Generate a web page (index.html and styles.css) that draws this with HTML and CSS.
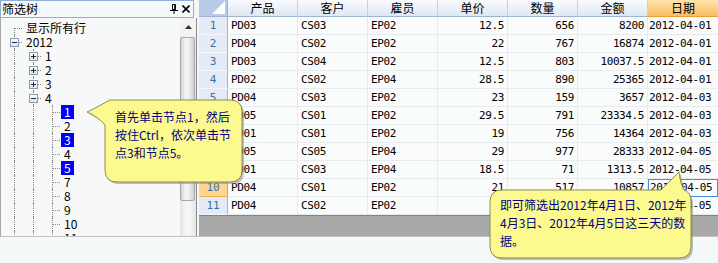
FILE: index.html
```html
<!DOCTYPE html>
<html lang="zh-CN">

<head>
  <meta charset="UTF-8" />
  <title>筛选树</title>
  <link rel="stylesheet" href="styles.css">
</head>

<body>
  <div class="app">
    <div class="workspace">
      <aside class="filter-panel">
        <div class="panel-title">
          <span>筛选树</span>
          <span class="title-icons">
            <svg class="pin" width="8" height="10" viewBox="0 0 8 10">
              <path d="M2.5 0.5h3v5h-3z" fill="none" stroke="#000" />
              <path d="M5 1v4.5" stroke="#000" stroke-width="1.5" />
              <path d="M0 6.5h8M4 6.5v3.5" stroke="#000" />
            </svg>
            <svg class="close" width="8" height="8" viewBox="0 0 8 8">
              <path d="M0.5 0.5l7 7M7.5 0.5l-7 7" stroke="#000" stroke-width="1.6" />
            </svg>
          </span>
        </div>
        <div class="tree-box">
          <div class="tree">
            <div class="node"><i class="g first"></i><span class="label">显示所有行</span></div>
            <div class="node"><i class="g tee"><b class="exp minus"></b></i><span class="label">2012</span></div>
            <div class="node"><i class="g line"></i><i class="g tee"><b class="exp plus"></b></i><span class="label">1</span></div>
            <div class="node"><i class="g line"></i><i class="g tee"><b class="exp plus"></b></i><span class="label">2</span></div>
            <div class="node"><i class="g line"></i><i class="g tee"><b class="exp plus"></b></i><span class="label">3</span></div>
            <div class="node"><i class="g line"></i><i class="g tee"><b class="exp minus"></b></i><span class="label">4</span></div>
            <div class="node"><i class="g line"></i><i class="g line"></i><i class="g tee"></i><span class="label selected">1</span></div>
            <div class="node"><i class="g line"></i><i class="g line"></i><i class="g tee"></i><span class="label">2</span></div>
            <div class="node"><i class="g line"></i><i class="g line"></i><i class="g tee"></i><span class="label selected">3</span></div>
            <div class="node"><i class="g line"></i><i class="g line"></i><i class="g tee"></i><span class="label">4</span></div>
            <div class="node"><i class="g line"></i><i class="g line"></i><i class="g tee"></i><span class="label selected">5</span></div>
            <div class="node"><i class="g line"></i><i class="g line"></i><i class="g tee"></i><span class="label">7</span></div>
            <div class="node"><i class="g line"></i><i class="g line"></i><i class="g tee"></i><span class="label">8</span></div>
            <div class="node"><i class="g line"></i><i class="g line"></i><i class="g tee"></i><span class="label">9</span></div>
            <div class="node"><i class="g line"></i><i class="g line"></i><i class="g tee"></i><span class="label">10</span></div>
            <div class="node"><i class="g line"></i><i class="g line"></i><i class="g tee"></i><span class="label">11</span></div>
          </div>
          <div class="vscroll">
            <div class="vscroll-up">
              <svg width="7" height="4" viewBox="0 0 7 4"><path d="M0 4L3.5 0L7 4z" fill="#333" /></svg>
            </div>
            <div class="vscroll-thumb"></div>
          </div>
        </div>
      </aside>

      <section class="grid">
        <div class="grid-head">
          <div class="corner">
            <svg width="13" height="13" viewBox="0 0 13 13"><path d="M13 0V13H0z" fill="#fff" /></svg>
          </div>
          <div class="col-head">产品</div>
          <div class="col-head">客户</div>
          <div class="col-head">雇员</div>
          <div class="col-head">单价</div>
          <div class="col-head">数量</div>
          <div class="col-head">金额</div>
          <div class="col-head sorted">日期</div>
        </div>

        <div class="grid-row"><div class="row-head">1</div><div class="cell">PD03</div><div class="cell">CS03</div><div class="cell">EP02</div><div class="cell num">12.5</div><div class="cell num">656</div><div class="cell num">8200</div><div class="cell date">2012-04-01</div></div>
        <div class="grid-row"><div class="row-head">2</div><div class="cell">PD04</div><div class="cell">CS02</div><div class="cell">EP02</div><div class="cell num">22</div><div class="cell num">767</div><div class="cell num">16874</div><div class="cell date">2012-04-01</div></div>
        <div class="grid-row"><div class="row-head">3</div><div class="cell">PD03</div><div class="cell">CS04</div><div class="cell">EP02</div><div class="cell num">12.5</div><div class="cell num">803</div><div class="cell num">10037.5</div><div class="cell date">2012-04-01</div></div>
        <div class="grid-row"><div class="row-head">4</div><div class="cell">PD02</div><div class="cell">CS02</div><div class="cell">EP04</div><div class="cell num">28.5</div><div class="cell num">890</div><div class="cell num">25365</div><div class="cell date">2012-04-01</div></div>
        <div class="grid-row"><div class="row-head">5</div><div class="cell">PD04</div><div class="cell">CS03</div><div class="cell">EP02</div><div class="cell num">23</div><div class="cell num">159</div><div class="cell num">3657</div><div class="cell date">2012-04-03</div></div>
        <div class="grid-row"><div class="row-head">6</div><div class="cell">PD05</div><div class="cell">CS01</div><div class="cell">EP02</div><div class="cell num">29.5</div><div class="cell num">791</div><div class="cell num">23334.5</div><div class="cell date">2012-04-03</div></div>
        <div class="grid-row"><div class="row-head">7</div><div class="cell">PD01</div><div class="cell">CS01</div><div class="cell">EP02</div><div class="cell num">19</div><div class="cell num">756</div><div class="cell num">14364</div><div class="cell date">2012-04-03</div></div>
        <div class="grid-row"><div class="row-head">8</div><div class="cell">PD05</div><div class="cell">CS05</div><div class="cell">EP04</div><div class="cell num">29</div><div class="cell num">977</div><div class="cell num">28333</div><div class="cell date">2012-04-05</div></div>
        <div class="grid-row"><div class="row-head">9</div><div class="cell">PD01</div><div class="cell">CS03</div><div class="cell">EP04</div><div class="cell num">18.5</div><div class="cell num">71</div><div class="cell num">1313.5</div><div class="cell date">2012-04-05</div></div>
        <div class="grid-row current"><div class="row-head">10</div><div class="cell">PD04</div><div class="cell">CS01</div><div class="cell">EP02</div><div class="cell num">21</div><div class="cell num">517</div><div class="cell num">10857</div><div class="cell date active">2012-04-05</div></div>
        <div class="grid-row"><div class="row-head">11</div><div class="cell">PD04</div><div class="cell">CS02</div><div class="cell">EP02</div><div class="cell num">25</div><div class="cell num">480</div><div class="cell num">12000</div><div class="cell date">2012-04-05</div></div>

        <div class="filler"></div>
      </section>
    </div>

    <div class="statusbar"></div>

    <!-- tips drawn over the panel and grid -->
    <div class="callout callout-tree">
      <svg width="160" height="88" viewBox="0 0 160 88">
        <path class="shade" transform="translate(2 2)" d="M1 13C10 9 18 4 24 1H144Q156 1 156 13V71Q156 83 144 83H31Q19 83 19 71V26C14 20 8 16 1 13Z" />
        <path class="bubble" d="M1 13C10 9 18 4 24 1H144Q156 1 156 13V71Q156 83 144 83H31Q19 83 19 71V26C14 20 8 16 1 13Z" />
      </svg>
      <p class="callout-text">首先单击节点1，然后<br>按住Ctrl，依次单击节<br>点3和节点5。</p>
    </div>

    <div class="callout callout-grid">
      <svg width="206" height="92" viewBox="0 0 206 92">
        <path class="shade" transform="translate(2 2)" d="M13 19H172L190 1C191 8 192 14 195 19Q202 21 202 31V75Q202 87 190 87H13Q1 87 1 75V31Q1 19 13 19Z" />
        <path class="bubble" d="M13 19H172L190 1C191 8 192 14 195 19Q202 21 202 31V75Q202 87 190 87H13Q1 87 1 75V31Q1 19 13 19Z" />
      </svg>
      <p class="callout-text">即可筛选出2012年4月1日、2012年<br>4月3日、2012年4月5日这三天的数<br>据。</p>
    </div>
  </div>
</body>

</html>
```

FILE: styles.css
```css
:root {
  --cjk-font: "Noto Sans CJK SC", sans-serif;
  --cell-font: "DejaVu Sans Mono", "Liberation Mono", monospace;
  --grid-line: #e8ebee;
  --dots: #8a8a8a;
}

body {
  margin: 0;
  font-family: var(--cjk-font);
  font-size: 12px;
  color: #000;
  background-color: #f4f7f7;
}

.app {
  position: relative;
  width: 718px;
  height: 263px;
  overflow: hidden;
}

.workspace {
  display: flex;
  height: 236px;
}

/* left filter tree */

.filter-panel {
  flex: none;
  width: 197px;
  display: flex;
  flex-direction: column;
}

.panel-title {
  height: 18px;
  margin-right: 3px;
  padding: 0 3px 0 1px;
  box-sizing: border-box;
  display: flex;
  align-items: center;
  justify-content: space-between;
  border: 1px solid #8eaed6;
  background-color: #f6f9fc;
  line-height: 16px;
}

.title-icons {
  display: flex;
  align-items: center;
  gap: 4px;
}

.title-icons svg {
  display: block;
}

.tree-box {
  flex: 1;
  min-height: 0;
  display: flex;
  border-left: 1px solid #a8a8a8;
  border-right: 1px solid #8c8c8c;
  background-color: #f7f9f9;
}

.tree {
  flex: 1;
  padding: 3px 0 0 4px;
  overflow: hidden;
}

.node {
  display: flex;
  align-items: center;
  height: 14px;
}

.g {
  position: relative;
  flex: none;
  width: 19px;
  height: 14px;
}

.g::before,
.g::after {
  content: '';
  position: absolute;
}

.g.line::before,
.g.tee::before {
  left: 9px;
  top: 0;
  bottom: 0;
  border-left: 1px dotted var(--dots);
}

.g.first::before {
  left: 9px;
  top: 7px;
  bottom: 0;
  border-left: 1px dotted var(--dots);
}

.g.tee::after,
.g.first::after {
  left: 10px;
  right: 2px;
  top: 7px;
  border-top: 1px dotted var(--dots);
}

.exp {
  position: absolute;
  z-index: 1;
  left: 5px;
  top: 3px;
  width: 9px;
  height: 9px;
  box-sizing: border-box;
  border: 1px solid #8e99ab;
  background: linear-gradient(#ffffff, #e2e4e8);
}

.exp::before,
.exp::after {
  content: '';
  position: absolute;
  background-color: #1c2a4a;
}

.exp::before {
  left: 1px;
  top: 3px;
  width: 5px;
  height: 1px;
}

.exp.plus::after {
  left: 3px;
  top: 1px;
  width: 1px;
  height: 5px;
}

.label {
  margin-left: 1px;
  padding: 0 1px;
  line-height: 14px;
  white-space: nowrap;
}

.label.selected {
  padding: 0 3px;
  margin-left: -1px;
  color: #fff;
  background-color: #0000ff;
}

.vscroll {
  flex: none;
  width: 16px;
  display: flex;
  flex-direction: column;
  background: linear-gradient(to right, #e4e4e4, #f6f6f6 40%, #f6f6f6 60%, #e6e6e6);
}

.vscroll-up {
  height: 18px;
  display: flex;
  align-items: center;
  justify-content: center;
  background-color: #f2f3f3;
}

.vscroll-up svg {
  display: block;
}

.vscroll-thumb {
  height: 164px;
  margin: 1px 1px 0 0;
  box-sizing: border-box;
  border: 1px solid #a9a9a9;
  border-radius: 2px;
  background: linear-gradient(to right, #d4d4d4, #f4f4f4 35%, #f4f4f4 55%, #cfcfcf);
}

/* data grid */

.grid {
  flex: none;
  width: 519px;
  margin-left: 2px;
  display: flex;
  flex-direction: column;
}

.grid-head,
.grid-row {
  display: grid;
  grid-template-columns: 29px repeat(7, 70px);
}

.grid-head {
  height: 17px;
}

.grid-row {
  height: 18px;
}

.corner {
  display: flex;
  align-items: flex-end;
  justify-content: flex-end;
  padding: 0 2px 2px 0;
  box-sizing: border-box;
  background-color: #b7cbe8;
  border-right: 1px solid #9db4d7;
  border-bottom: 1px solid #9db4d7;
}

.corner svg {
  display: block;
}

.col-head {
  box-sizing: border-box;
  text-align: center;
  line-height: 16px;
  background: linear-gradient(#f9fbfe, #dee7f3);
  border-right: 1px solid #c3d1e4;
  border-bottom: 1px solid #9fb4d2;
}

.col-head.sorted {
  background: linear-gradient(#ffe6ad, #f8bd60);
  border-right: 0;
  border-bottom-color: #ee9c34;
}

.row-head {
  box-sizing: border-box;
  text-align: center;
  font-family: var(--cell-font);
  font-size: 11px;
  line-height: 17px;
  color: #3a6fae;
  background-color: #e4ebf6;
  border-right: 1px solid #9db4d7;
  border-bottom: 1px solid #f3f6fb;
}

.current .row-head {
  background-color: #ffd592;
  border-right-color: #ef9e3a;
  border-bottom-color: #f3b14f;
}

.cell {
  box-sizing: border-box;
  padding: 0 3px;
  font-family: var(--cell-font);
  font-size: 11px;
  letter-spacing: -0.4px;
  line-height: 17px;
  white-space: nowrap;
  overflow: hidden;
  background-color: #fafbfb;
  border-right: 1px solid var(--grid-line);
  border-bottom: 1px solid var(--grid-line);
}

.cell.num {
  text-align: right;
}

.cell.date {
  padding: 0 1px;
  border-right: 0;
}

.cell.active {
  border: 1px solid #3f8fe6;
  line-height: 15px;
}

.filler {
  flex: 1;
  background-color: #a9a9a9;
  border-top: 1px solid #848484;
}

.statusbar {
  height: 27px;
  box-sizing: border-box;
  border-top: 1px solid #c3c3c3;
  background-color: #f5f8f8;
}

/* tips */

.callout {
  position: absolute;
}

.callout svg {
  display: block;
}

.callout-tree {
  left: 86px;
  top: 99px;
}

.callout-grid {
  left: 489px;
  top: 171px;
}

.bubble {
  fill: #fcfa8e;
  stroke: #8b8a58;
  stroke-width: 1;
}

.shade {
  fill: #8f8f72;
  opacity: 0.55;
}

.callout-text {
  position: absolute;
  margin: 0;
  font-size: 12px;
  line-height: 18px;
  color: #000080;
  white-space: nowrap;
}

.callout-tree .callout-text {
  left: 29px;
  top: 9px;
}

.callout-grid .callout-text {
  left: 11px;
  top: 25px;
}
```
